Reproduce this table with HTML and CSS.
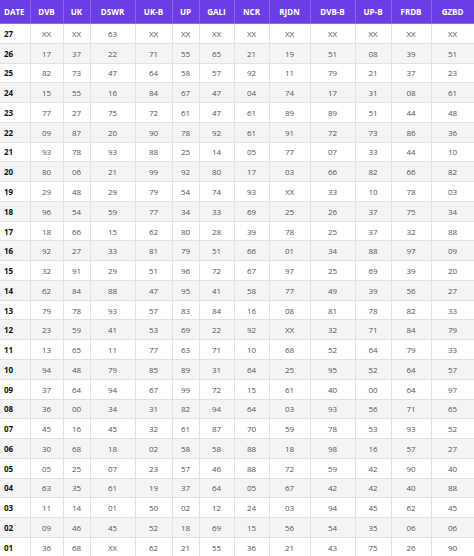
FILE: index.html
```html
<!DOCTYPE html>
<html>
<head>
<meta charset="utf-8">
<link rel="stylesheet" href="styles.css">
</head>
<body>
<table class="chart">
<colgroup>
<col class="c-date"><col class="c-dvb"><col class="c-uk"><col class="c-dswr"><col class="c-ukb"><col class="c-up"><col class="c-gali"><col class="c-ncr"><col class="c-rjdn"><col class="c-dvbb"><col class="c-upb"><col class="c-frdb"><col class="c-gzbd">
</colgroup>
<thead>
<tr><th class="date">DATE</th><th>DVB</th><th>UK</th><th>DSWR</th><th>UK-B</th><th>UP</th><th>GALI</th><th>NCR</th><th>RJDN</th><th>DVB-B</th><th>UP-B</th><th>FRDB</th><th>GZBD</th></tr>
</thead>
<tbody>
<tr><td class="date">27</td><td>XX</td><td>XX</td><td>63</td><td>XX</td><td>XX</td><td>XX</td><td>XX</td><td>XX</td><td>XX</td><td>XX</td><td>XX</td><td>XX</td></tr>
<tr><td class="date">26</td><td>17</td><td>37</td><td>22</td><td>71</td><td>55</td><td>65</td><td>21</td><td>19</td><td>51</td><td>08</td><td>39</td><td>51</td></tr>
<tr><td class="date">25</td><td>82</td><td>73</td><td>47</td><td>64</td><td>58</td><td>57</td><td>92</td><td>11</td><td>79</td><td>21</td><td>37</td><td>23</td></tr>
<tr><td class="date">24</td><td>15</td><td>55</td><td>16</td><td>84</td><td>67</td><td>47</td><td>04</td><td>74</td><td>17</td><td>31</td><td>08</td><td>61</td></tr>
<tr><td class="date">23</td><td>77</td><td>27</td><td>75</td><td>72</td><td>61</td><td>47</td><td>61</td><td>89</td><td>89</td><td>51</td><td>44</td><td>48</td></tr>
<tr><td class="date">22</td><td>09</td><td>87</td><td>20</td><td>90</td><td>78</td><td>92</td><td>61</td><td>91</td><td>72</td><td>73</td><td>86</td><td>36</td></tr>
<tr><td class="date">21</td><td>93</td><td>78</td><td>93</td><td>88</td><td>25</td><td>14</td><td>05</td><td>77</td><td>07</td><td>33</td><td>44</td><td>10</td></tr>
<tr><td class="date">20</td><td>80</td><td>06</td><td>21</td><td>99</td><td>92</td><td>80</td><td>17</td><td>03</td><td>66</td><td>82</td><td>66</td><td>82</td></tr>
<tr><td class="date">19</td><td>29</td><td>48</td><td>29</td><td>79</td><td>54</td><td>74</td><td>93</td><td>XX</td><td>33</td><td>10</td><td>78</td><td>03</td></tr>
<tr><td class="date">18</td><td>96</td><td>54</td><td>59</td><td>77</td><td>34</td><td>33</td><td>69</td><td>25</td><td>26</td><td>37</td><td>75</td><td>34</td></tr>
<tr><td class="date">17</td><td>18</td><td>66</td><td>15</td><td>62</td><td>80</td><td>28</td><td>39</td><td>78</td><td>25</td><td>37</td><td>32</td><td>88</td></tr>
<tr><td class="date">16</td><td>92</td><td>27</td><td>33</td><td>81</td><td>79</td><td>51</td><td>66</td><td>01</td><td>34</td><td>88</td><td>97</td><td>09</td></tr>
<tr><td class="date">15</td><td>32</td><td>91</td><td>29</td><td>51</td><td>96</td><td>72</td><td>67</td><td>97</td><td>25</td><td>69</td><td>39</td><td>20</td></tr>
<tr><td class="date">14</td><td>62</td><td>84</td><td>88</td><td>47</td><td>95</td><td>41</td><td>58</td><td>77</td><td>49</td><td>39</td><td>56</td><td>27</td></tr>
<tr><td class="date">13</td><td>79</td><td>78</td><td>93</td><td>57</td><td>83</td><td>84</td><td>16</td><td>08</td><td>81</td><td>78</td><td>82</td><td>33</td></tr>
<tr><td class="date">12</td><td>23</td><td>59</td><td>41</td><td>53</td><td>69</td><td>22</td><td>92</td><td>XX</td><td>32</td><td>71</td><td>84</td><td>79</td></tr>
<tr><td class="date">11</td><td>13</td><td>65</td><td>11</td><td>77</td><td>63</td><td>71</td><td>10</td><td>68</td><td>52</td><td>64</td><td>79</td><td>33</td></tr>
<tr><td class="date">10</td><td>94</td><td>48</td><td>79</td><td>85</td><td>89</td><td>31</td><td>64</td><td>25</td><td>95</td><td>52</td><td>64</td><td>57</td></tr>
<tr><td class="date">09</td><td>37</td><td>64</td><td>94</td><td>67</td><td>99</td><td>72</td><td>15</td><td>61</td><td>40</td><td>00</td><td>64</td><td>97</td></tr>
<tr><td class="date">08</td><td>36</td><td>00</td><td>34</td><td>31</td><td>82</td><td>94</td><td>64</td><td>03</td><td>93</td><td>56</td><td>71</td><td>65</td></tr>
<tr><td class="date">07</td><td>45</td><td>16</td><td>45</td><td>32</td><td>61</td><td>87</td><td>70</td><td>59</td><td>78</td><td>53</td><td>93</td><td>52</td></tr>
<tr><td class="date">06</td><td>30</td><td>68</td><td>18</td><td>02</td><td>58</td><td>58</td><td>88</td><td>18</td><td>98</td><td>16</td><td>57</td><td>27</td></tr>
<tr><td class="date">05</td><td>05</td><td>25</td><td>07</td><td>23</td><td>57</td><td>46</td><td>88</td><td>72</td><td>59</td><td>42</td><td>90</td><td>40</td></tr>
<tr><td class="date">04</td><td>63</td><td>35</td><td>61</td><td>19</td><td>37</td><td>64</td><td>05</td><td>67</td><td>42</td><td>42</td><td>40</td><td>88</td></tr>
<tr><td class="date">03</td><td>11</td><td>14</td><td>01</td><td>50</td><td>02</td><td>12</td><td>24</td><td>03</td><td>94</td><td>45</td><td>62</td><td>45</td></tr>
<tr><td class="date">02</td><td>09</td><td>46</td><td>45</td><td>52</td><td>18</td><td>69</td><td>15</td><td>56</td><td>54</td><td>35</td><td>06</td><td>06</td></tr>
<tr><td class="date">01</td><td>36</td><td>68</td><td>XX</td><td>62</td><td>21</td><td>55</td><td>36</td><td>21</td><td>43</td><td>75</td><td>26</td><td>90</td></tr>
</tbody>
</table>
</body>
</html>
```
FILE: styles.css
```css
html, body {
  margin: 0;
  padding: 0;
  background: #ffffff;
}
body {
  font-family: "Open Sans", "Noto Sans", sans-serif;
}
.chart {
  width: 474px;
  border-collapse: collapse;
  table-layout: fixed;
  font-size: 8px;
}
.c-date { width: 30px; }
.c-dvb { width: 33px; }
.c-uk { width: 27px; }
.c-dswr { width: 45px; }
.c-ukb { width: 37px; }
.c-up { width: 27px; }
.c-gali { width: 35px; }
.c-ncr { width: 35px; }
.c-rjdn { width: 41px; }
.c-dvbb { width: 45px; }
.c-upb { width: 36px; }
.c-frdb { width: 40px; }
.c-gzbd { width: 43px; }
.chart thead tr {
  height: 23.5px;
}
.chart th {
  background: #6b3ee6;
  color: #ffffff;
  font-weight: 700;
  font-size: 8px;
  border: 1px solid #8a66ee;
  border-top: none;
  padding: 0;
  text-align: center;
  white-space: nowrap;
}
.chart tbody tr {
  height: 19.77px;
}
.chart tbody tr:nth-child(even) {
  background: #f4f4f4;
}
.chart td {
  border: 1px solid #e2e2e2;
  padding: 0;
  text-align: center;
  color: #555555;
  white-space: nowrap;
}
.chart th:first-child, .chart td:first-child {
  border-left: none;
}
.chart th.date {
  text-align: left;
  padding-left: 4px;
}
.chart td.date {
  text-align: left;
  padding-left: 4px;
  font-weight: 700;
  color: #111111;
}
```
